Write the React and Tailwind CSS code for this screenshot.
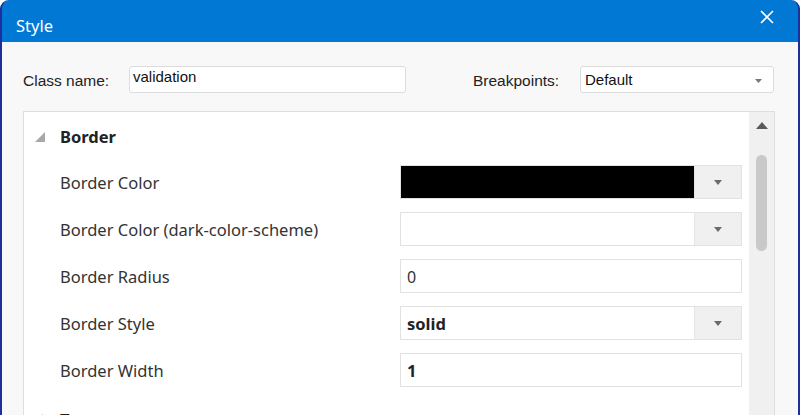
import React from "react";

const lbl = { fontFamily: '"Noto Sans", "Open Sans", sans-serif' };
const ui = { fontFamily: '"Liberation Sans", Arial, sans-serif' };

function Caret() {
  return (
    <svg width="8" height="5" viewBox="0 0 8 5">
      <path d="M0 0 L8 0 L4 5 Z" fill="#6b6b6b" />
    </svg>
  );
}

function DropBtn() {
  return (
    <div className="w-[47px] h-full bg-[#f0f0f0] border-l border-[#e4e4e4] flex items-center justify-center">
      <Caret />
    </div>
  );
}

function Row({ label, children }) {
  return (
    <div className="flex items-center h-[34px] mb-[13px]">
      <div className="w-[376px] pl-[36px] pt-[3px] text-[16.5px] text-[#333]" style={lbl}>
        {label}
      </div>
      <div className="w-[342px] h-full">{children}</div>
    </div>
  );
}

export default function App() {
  return (
    <div className="w-[800px] h-[415px] overflow-hidden bg-white">
      <div className="w-full h-full rounded-t-[9px] overflow-hidden flex flex-col border-x-2 border-[#1b2f9e] bg-[#0078d4]">
        <div className="h-[42px] shrink-0 flex items-center justify-between pl-[14px] pr-[24px]">
          <span className="text-white text-[16.5px] pt-[10px]" style={lbl}>Style</span>
          <svg width="14" height="14" viewBox="0 0 14 14" className="mt-[-8px]">
            <path d="M1 1 L13 13 M13 1 L1 13" stroke="white" strokeWidth="1.6" />
          </svg>
        </div>
        <div className="flex-1 bg-[#f8f8f8] flex flex-col">
          <div className="flex items-center pt-[24px] h-[51px] pl-[21px]" style={ui}>
            <span className="text-[15.5px] text-[#222] w-[106px] pt-[2px]">Class name:</span>
            <div className="w-[277px] h-[27px] bg-white border border-[#dcdcdc] rounded-[3px] px-[3px] text-[15px] text-[#111] leading-[18px] pt-[1px]">
              validation
            </div>
            <span className="text-[15.5px] text-[#222] ml-[67px] w-[107px] pt-[2px]">Breakpoints:</span>
            <div className="w-[194px] h-[27px] bg-white border border-[#dcdcdc] rounded-[3px] pl-[4px] pr-[11px] text-[15px] text-[#111] flex items-center justify-between pt-[2px]">
              <span>Default</span>
              <svg width="7" height="4" viewBox="0 0 7 4"><path d="M0 0 L7 0 L3.5 4 Z" fill="#777" /></svg>
            </div>
          </div>
          <div className="mt-[18px] ml-[21px] w-[752px] flex-1 border-t border-l border-r border-[#dedede] bg-white flex">
            <div className="flex-1 flex flex-col">
              <div className="flex items-center h-[48px] pt-[2px]">
                <svg width="12" height="12" viewBox="0 0 12 12" className="ml-[10px] mr-[14px] mt-[-1px]">
                  <path d="M11 1 L11 11 L1 11 Z" fill="#a8a8a8" />
                </svg>
                <span className="text-[16.5px] font-bold text-[#222]" style={lbl}>Border</span>
              </div>
              <div className="pt-[5px]">
                <Row label="Border Color">
                  <div className="flex h-full border border-[#e2e2e2]">
                    <div className="flex-1 bg-black" />
                    <DropBtn />
                  </div>
                </Row>
                <Row label="Border Color (dark-color-scheme)">
                  <div className="flex h-full border border-[#e2e2e2] bg-white">
                    <div className="flex-1" />
                    <DropBtn />
                  </div>
                </Row>
                <Row label="Border Radius">
                  <div className="flex items-center h-full border border-[#e2e2e2] bg-white pl-[6px] pt-[2px] text-[16px] text-[#333]" style={lbl}>
                    0
                  </div>
                </Row>
                <Row label="Border Style">
                  <div className="flex h-full border border-[#e2e2e2] bg-white">
                    <div className="flex-1 flex items-center pl-[6px] pt-[2px] text-[16.5px] font-bold text-[#222]" style={lbl}>solid</div>
                    <DropBtn />
                  </div>
                </Row>
                <Row label="Border Width">
                  <div className="flex items-center h-full border border-[#e2e2e2] bg-white pl-[6px] pt-[2px] text-[16.5px] font-bold text-[#222]" style={lbl}>
                    1
                  </div>
                </Row>
                <div className="flex items-start h-[30px] mt-[12px] pt-[10px]">
                  <svg width="10" height="10" viewBox="0 0 10 10" className="ml-[16px] mr-[10px] mt-[4px]">
                    <path d="M2 0 L8 5 L2 10 Z" fill="#a8a8a8" />
                  </svg>
                  <span className="text-[16.5px] font-bold text-[#222] leading-[20px]" style={lbl}>Text</span>
                </div>
              </div>
            </div>
            <div className="w-[25px] bg-[#f0f0f0] flex flex-col items-center pt-[10px]">
              <svg width="12" height="7" viewBox="0 0 12 7"><path d="M0 7 L6 0 L12 7 Z" fill="#5a5a5a" /></svg>
              <div className="mt-[26px] w-[11px] h-[96px] rounded-full bg-[#c9c9c9]" />
            </div>
          </div>
        </div>
      </div>
    </div>
  );
}
